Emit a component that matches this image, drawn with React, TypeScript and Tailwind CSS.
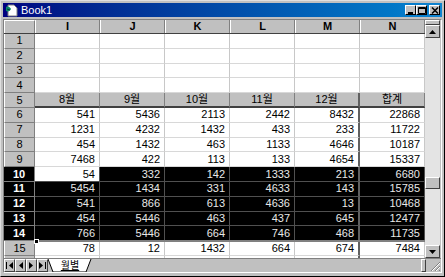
import React from "react";

// sheet data, rows 1..16 (columns I..N)
const cols = ["I", "J", "K", "L", "M", "N"];
const data: Record<number, string[]> = {
    5: ["8월", "9월", "10월", "11월", "12월", "합계"],
    6: ["541", "5436", "2113", "2442", "8432", "22868"],
    7: ["1231", "4232", "1432", "433", "233", "11722"],
    8: ["454", "1432", "463", "1133", "4646", "10187"],
    9: ["7468", "422", "113", "133", "4654", "15337"],
    10: ["54", "332", "142", "1333", "213", "6680"],
    11: ["5454", "1434", "331", "4633", "143", "15785"],
    12: ["541", "866", "613", "4636", "13", "10468"],
    13: ["454", "5446", "463", "437", "645", "12477"],
    14: ["766", "5446", "664", "746", "468", "11735"],
    15: ["78", "12", "1432", "664", "674", "7484"],
    16: ["676", "32", "1431", "400", "987", "8100"],
};

const isSel = (r: number) => r >= 10 && r <= 14;

// little excel sheet icon
const SheetIcon = () => (
    <svg width="13" height="13" viewBox="0 0 13 13">
        <path d="M3 1h6l3 3v8H3z" fill="#fff" stroke="#808080" strokeWidth="1" />
        <path d="M1 3c2-1 4 0 5 2-1 2-3 3-5 2z" fill="#0a8a6a" />
        <path d="M2 5l3 1" stroke="#004040" strokeWidth="1" />
    </svg>
);

const TitleButton = ({ kind }: { kind: "min" | "max" | "close" }) => (
    <div className="w-[11px] h-[10px] bg-[#c0c0c0] border border-t-white border-l-white border-r-black border-b-black flex items-center justify-center">
        <svg width="8" height="7" viewBox="0 0 8 7">
            {kind === "min" && <rect x="1" y="5" width="5" height="2" fill="#000" />}
            {kind === "max" && (
                <path d="M0.5 0.5h7v6h-7zM0.5 1.5h7" fill="none" stroke="#000" strokeWidth="1" />
            )}
            {kind === "close" && (
                <path d="M1 0.5l6 6M7 0.5l-6 6" stroke="#000" strokeWidth="1.5" />
            )}
        </svg>
    </div>
);

const Row = ({ r }: { r: number }) => {
    const sel = isSel(r);
    const vals = data[r] || ["", "", "", "", "", ""];
    return (
        <div className="flex h-[14.8px] shrink-0">
            <div
                className={`w-[31px] shrink-0 flex items-center justify-center text-[11px] leading-none border-r border-b ${
                    sel
                        ? "bg-black text-white font-bold border-r-[#808080] border-b-[#808080]"
                        : "bg-[#c0c0c0] text-black border-r-[#808080] border-b-[#808080] border-l border-l-white"
                }`}
            >
                {r}
            </div>
            {vals.map((v, i) => {
                const active = r === 10 && i === 0;
                const head = r === 5;
                let cls = "bg-white text-black border-r-[#c8c8c8] border-b-[#d8d8d8]";
                if (head) cls = "bg-[#c0c0c0] text-black border-r-[#808080] border-b-2 border-b-[#404040]";
                if (sel) cls = "bg-black text-[#e8e8e8] border-r-[#505050] border-b-[#505050]";
                if (active) cls = "bg-white text-black border-r-[#505050] border-b-[#505050]";
                const thick = i === 4 && r >= 5 ? "border-r-2 !border-r-[#606060]" : "border-r";
                return (
                    <div
                        key={i}
                        className={`w-[65px] shrink-0 flex items-center text-[11px] leading-none border-b ${thick} ${cls} ${
                            head ? "justify-center" : "justify-end pr-[4px]"
                        }`}
                    >
                        {v}
                    </div>
                );
            })}
        </div>
    );
};

const Tri = ({ dir }: { dir: "l" | "r" }) => (
    <svg width="5" height="7" viewBox="0 0 5 7">
        <path d={dir === "l" ? "M5 0v7L1 3.5z" : "M0 0v7l4-3.5z"} fill="#000" />
    </svg>
);

const NavBtn = ({ children }: { children: React.ReactNode }) => (
    <div className="w-[11px] h-[13px] bg-[#c0c0c0] border border-t-white border-l-white border-r-[#404040] border-b-[#404040] flex items-center justify-center gap-px">
        {children}
    </div>
);

export default function App() {
    return (
        <div className="w-[445px] h-[277px] bg-[#c0c0c0] border border-t-[#dfdfdf] border-l-[#dfdfdf] border-r-black border-b-black p-[2px] pb-[3px] flex flex-col font-['Liberation_Sans','Noto_Sans_CJK_KR',sans-serif] overflow-hidden">
            {/* title bar */}
            <div className="h-[14px] shrink-0 flex items-center bg-linear-to-r from-[#000080] to-[#1084d0] pl-[2px] pr-[2px]">
                <SheetIcon />
                <span className="ml-[3px] text-white text-[11px] leading-none">Book1</span>
                <div className="ml-auto flex items-center">
                    <TitleButton kind="min" />
                    <TitleButton kind="max" />
                    <div className="w-[2px]" />
                    <TitleButton kind="close" />
                </div>
            </div>

            {/* workbook body */}
            <div className="mt-[2px] flex-1 flex flex-col border border-t-[#808080] border-l-[#808080] border-r-white border-b-white">
                <div className="flex h-[238px] shrink-0">
                    {/* sheet */}
                    <div className="w-[421px] flex flex-col relative">
                        <div className="flex h-[14px] shrink-0 border-b border-b-[#404040]">
                            <div className="w-[31px] bg-[#c0c0c0] border border-t-white border-l-white border-r-[#808080] border-b-0" />
                            {cols.map((c) => (
                                <div
                                    key={c}
                                    className="w-[65px] bg-[#c0c0c0] border-l border-l-white border-r border-r-[#808080] flex items-center justify-center text-[11px] font-bold leading-none"
                                >
                                    {c}
                                </div>
                            ))}
                        </div>
                        <div className="h-[224px] overflow-hidden flex flex-col">
                            {Array.from({ length: 16 }, (_, k) => (
                                <Row key={k} r={k + 1} />
                            ))}
                        </div>
                        {/* selection outline + fill handle */}
                        <div className="absolute left-[31px] top-[147px] w-[390px] h-[75px] border-b-2 border-b-[#808080] pointer-events-none" />
                        <div className="absolute left-[30px] top-[219px] w-[5px] h-[5px] bg-black border border-white" />
                    </div>

                    {/* vertical scrollbar */}
                    <div className="w-[15px] flex flex-col bg-[#c0c0c0]">
                        <div className="h-[5px] border border-t-white border-l-white border-r-[#404040] border-b-[#404040]" />
                        <div className="h-[13px] border border-t-white border-l-white border-r-[#404040] border-b-[#404040] flex items-center justify-center">
                            <svg width="7" height="4" viewBox="0 0 7 4">
                                <path d="M0 4h7L3.5 0z" fill="#000" />
                            </svg>
                        </div>
                        <div className="flex-1 bg-[#e4e4e4] flex flex-col justify-end">
                            <div className="h-[12px] bg-[#c0c0c0] border border-t-white border-l-white border-r-[#404040] border-b-[#404040] mb-[56px]" />
                        </div>
                        <div className="h-[13px] border border-t-white border-l-white border-r-[#404040] border-b-[#404040] flex items-center justify-center">
                            <svg width="7" height="4" viewBox="0 0 7 4">
                                <path d="M0 0h7L3.5 4z" fill="#000" />
                            </svg>
                        </div>
                    </div>
                </div>

                {/* sheet tabs bar */}
                <div className="flex h-[14px] shrink-0 items-center border-t border-t-[#808080]">
                    <div className="flex">
                        <NavBtn>
                            <div className="w-px h-[7px] bg-black" />
                            <Tri dir="l" />
                        </NavBtn>
                        <NavBtn>
                            <Tri dir="l" />
                        </NavBtn>
                        <NavBtn>
                            <Tri dir="r" />
                        </NavBtn>
                        <NavBtn>
                            <Tri dir="r" />
                            <div className="w-px h-[7px] bg-black" />
                        </NavBtn>
                    </div>
                    <div className="relative w-[44px] h-[13px] flex items-center justify-center">
                        <svg className="absolute inset-0" width="44" height="13" viewBox="0 0 44 13">
                            <path d="M0 0L5 13H38L43 0" fill="#fff" stroke="#000" strokeWidth="1" />
                        </svg>
                        <span className="relative text-[10px] leading-[12px] underline">월별</span>
                    </div>
                    <div className="flex-1 h-full bg-[#c0c0c0]" />
                    <div className="w-[5px] h-full border border-t-white border-l-white border-r-[#404040] border-b-[#404040]" />
                    <div className="w-[15px] h-full relative">
                        <svg className="absolute right-0 bottom-0" width="12" height="12" viewBox="0 0 12 12">
                            <path d="M11 2L2 11M11 6L6 11M11 10L10 11" stroke="#808080" strokeWidth="1" />
                            <path d="M11 3L3 11M11 7L7 11" stroke="#fff" strokeWidth="1" />
                        </svg>
                    </div>
                </div>
            </div>
        </div>
    );
}
